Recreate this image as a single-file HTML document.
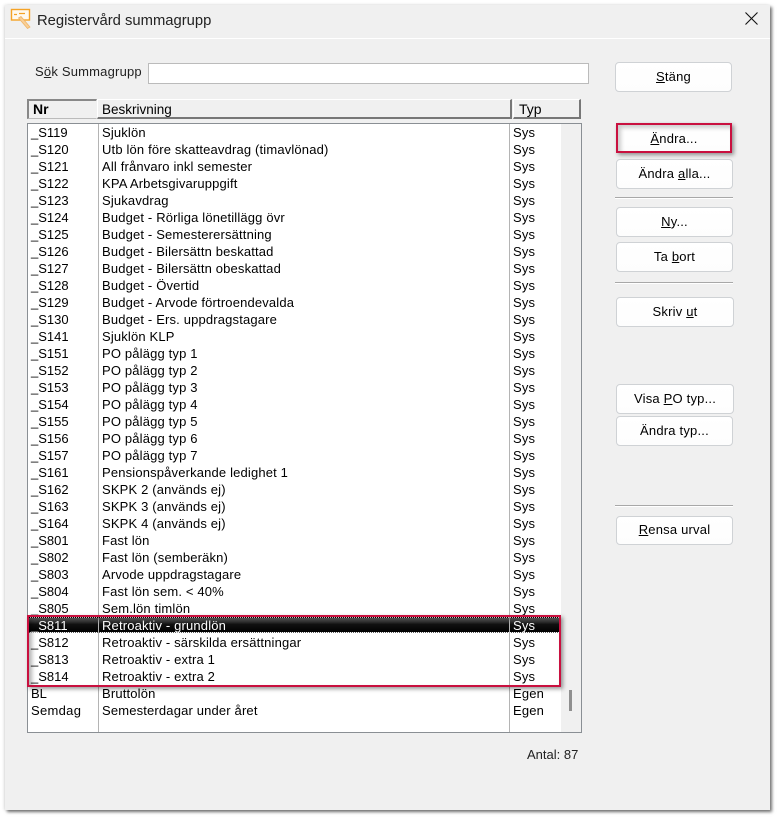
<!DOCTYPE html>
<html><head><meta charset="utf-8">
<style>
html,body{margin:0;padding:0;width:779px;height:819px;background:#fff;overflow:hidden}
body{font-family:"Liberation Sans",sans-serif;font-size:13px;color:#000;position:relative}
div{box-sizing:border-box;position:absolute}
#win{left:5px;top:5px;width:765px;height:805px;background:#f0f0f0;box-shadow:2px 2px 3px rgba(0,0,0,.55),-1px 0 3px rgba(0,0,0,.12)}
.t{white-space:nowrap;line-height:17px;height:17px}
.r{left:0;width:779px;height:17px}
.n{left:31px}.b{left:102px;letter-spacing:.16px}.y{left:513px;letter-spacing:.16px}
.btn{background:linear-gradient(#fff,#fdfdfd);border:1px solid #cfd2d5;border-radius:4px;text-align:center;white-space:nowrap;color:#000;letter-spacing:.2px}
.sep{left:615px;width:118px;height:2px;background:linear-gradient(#a8a8a8 50%,#fff 50%)}
.red{border:2.5px solid #c9103f;box-shadow:2px 2px 4px rgba(0,0,0,.4),inset 3px 3px 4px rgba(0,0,0,.3)}
u{text-underline-offset:1px}
.hd{background:#f0f0f0;border-top:1px solid #fff;border-left:1px solid #fff;border-right:2px solid #777;border-bottom:2px solid #777;line-height:17px;font-size:13.5px}
</style></head><body>
<div id="win"></div>
<div style="left:5px;top:38px;width:765px;height:1px;background:#fff"></div>
<svg style="position:absolute;left:10px;top:8px" width="22" height="22" viewBox="0 0 22 22"><rect x="1.5" y="1.5" width="18" height="10.5" fill="#fffaf0" stroke="#f5a326" stroke-width="1.4"/><path d="M4 6.5h3M9 5.5h6" stroke="#f5a326" stroke-width="1.2"/><path d="M11 8.5l9 10.5-2.5 1.5-9-10.5z" fill="#f9cf96" stroke="#eeb468" stroke-width=".8"/></svg>
<div class="t" style="left:37px;top:12px;font-size:14.8px;color:#222;line-height:18px;height:18px">Registervård summagrupp</div>
<svg style="position:absolute;left:745px;top:12px" width="13" height="13" viewBox="0 0 13 13"><path d="M.5 .5l12 12M12.5 .5l-12 12" stroke="#111" stroke-width="1.1" fill="none"/></svg>

<div class="t" style="left:35px;top:63px;color:#222;letter-spacing:.2px">S<u>ö</u>k Summagrupp</div>
<div style="left:148px;top:63px;width:441px;height:21px;background:#fff;border:1px solid #bbb"></div>

<div class="hd t" style="left:27px;top:99px;width:70px;height:20px;border-top:2px solid #888;border-left:2px solid #888;border-right:1px solid #f0f0f0;border-bottom:1px solid #bbb;font-weight:bold;font-size:14px;padding:0 0 0 4px">Nr</div>
<div class="hd t" style="left:97px;top:99px;width:415px;height:19.5px;padding:1px 0 0 4px">Beskrivning</div>
<div class="hd t" style="left:513px;top:99px;width:68px;height:19.5px;padding:1px 0 0 5px;font-size:14px">Typ</div>

<div style="left:27px;top:123px;width:555px;height:610px;background:#fff;border:1px solid #8a8f94"></div>
<div style="left:561px;top:124px;width:20px;height:608px;background:#f0f0f0"></div>
<div style="left:569px;top:690px;width:3px;height:21px;background:#8f8f8f"></div>

<div class="r" style="top:617px;height:16px;left:28px;width:533px;background:linear-gradient(#666,#111 45%,#000);border-top:1px dotted #fff;border-bottom:1px dotted #fff"></div>

<div class="t n" style="top:124px">_S119</div><div class="t b" style="top:124px">Sjuklön</div><div class="t y" style="top:124px">Sys</div>
<div class="t n" style="top:141px">_S120</div><div class="t b" style="top:141px">Utb lön före skatteavdrag (timavlönad)</div><div class="t y" style="top:141px">Sys</div>
<div class="t n" style="top:158px">_S121</div><div class="t b" style="top:158px">All frånvaro inkl semester</div><div class="t y" style="top:158px">Sys</div>
<div class="t n" style="top:175px">_S122</div><div class="t b" style="top:175px">KPA Arbetsgivaruppgift</div><div class="t y" style="top:175px">Sys</div>
<div class="t n" style="top:192px">_S123</div><div class="t b" style="top:192px">Sjukavdrag</div><div class="t y" style="top:192px">Sys</div>
<div class="t n" style="top:209px">_S124</div><div class="t b" style="top:209px">Budget - Rörliga lönetillägg övr</div><div class="t y" style="top:209px">Sys</div>
<div class="t n" style="top:226px">_S125</div><div class="t b" style="top:226px">Budget - Semesterersättning</div><div class="t y" style="top:226px">Sys</div>
<div class="t n" style="top:243px">_S126</div><div class="t b" style="top:243px">Budget - Bilersättn beskattad</div><div class="t y" style="top:243px">Sys</div>
<div class="t n" style="top:260px">_S127</div><div class="t b" style="top:260px">Budget - Bilersättn obeskattad</div><div class="t y" style="top:260px">Sys</div>
<div class="t n" style="top:277px">_S128</div><div class="t b" style="top:277px">Budget - Övertid</div><div class="t y" style="top:277px">Sys</div>
<div class="t n" style="top:294px">_S129</div><div class="t b" style="top:294px">Budget - Arvode förtroendevalda</div><div class="t y" style="top:294px">Sys</div>
<div class="t n" style="top:311px">_S130</div><div class="t b" style="top:311px">Budget - Ers. uppdragstagare</div><div class="t y" style="top:311px">Sys</div>
<div class="t n" style="top:328px">_S141</div><div class="t b" style="top:328px">Sjuklön KLP</div><div class="t y" style="top:328px">Sys</div>
<div class="t n" style="top:345px">_S151</div><div class="t b" style="top:345px">PO pålägg typ 1</div><div class="t y" style="top:345px">Sys</div>
<div class="t n" style="top:362px">_S152</div><div class="t b" style="top:362px">PO pålägg typ 2</div><div class="t y" style="top:362px">Sys</div>
<div class="t n" style="top:379px">_S153</div><div class="t b" style="top:379px">PO pålägg typ 3</div><div class="t y" style="top:379px">Sys</div>
<div class="t n" style="top:396px">_S154</div><div class="t b" style="top:396px">PO pålägg typ 4</div><div class="t y" style="top:396px">Sys</div>
<div class="t n" style="top:413px">_S155</div><div class="t b" style="top:413px">PO pålägg typ 5</div><div class="t y" style="top:413px">Sys</div>
<div class="t n" style="top:430px">_S156</div><div class="t b" style="top:430px">PO pålägg typ 6</div><div class="t y" style="top:430px">Sys</div>
<div class="t n" style="top:447px">_S157</div><div class="t b" style="top:447px">PO pålägg typ 7</div><div class="t y" style="top:447px">Sys</div>
<div class="t n" style="top:464px">_S161</div><div class="t b" style="top:464px">Pensionspåverkande ledighet 1</div><div class="t y" style="top:464px">Sys</div>
<div class="t n" style="top:481px">_S162</div><div class="t b" style="top:481px">SKPK 2 (används ej)</div><div class="t y" style="top:481px">Sys</div>
<div class="t n" style="top:498px">_S163</div><div class="t b" style="top:498px">SKPK 3 (används ej)</div><div class="t y" style="top:498px">Sys</div>
<div class="t n" style="top:515px">_S164</div><div class="t b" style="top:515px">SKPK 4 (används ej)</div><div class="t y" style="top:515px">Sys</div>
<div class="t n" style="top:532px">_S801</div><div class="t b" style="top:532px">Fast lön</div><div class="t y" style="top:532px">Sys</div>
<div class="t n" style="top:549px">_S802</div><div class="t b" style="top:549px">Fast lön (semberäkn)</div><div class="t y" style="top:549px">Sys</div>
<div class="t n" style="top:566px">_S803</div><div class="t b" style="top:566px">Arvode uppdragstagare</div><div class="t y" style="top:566px">Sys</div>
<div class="t n" style="top:583px">_S804</div><div class="t b" style="top:583px">Fast lön sem. &lt; 40%</div><div class="t y" style="top:583px">Sys</div>
<div class="t n" style="top:600px">_S805</div><div class="t b" style="top:600px">Sem.lön timlön</div><div class="t y" style="top:600px">Sys</div>
<div class="t n" style="top:617px;color:#fff">_S811</div><div class="t b" style="top:617px;color:#fff">Retroaktiv - grundlön</div><div class="t y" style="top:617px;color:#fff">Sys</div>
<div class="t n" style="top:634px">_S812</div><div class="t b" style="top:634px">Retroaktiv - särskilda ersättningar</div><div class="t y" style="top:634px">Sys</div>
<div class="t n" style="top:651px">_S813</div><div class="t b" style="top:651px">Retroaktiv - extra 1</div><div class="t y" style="top:651px">Sys</div>
<div class="t n" style="top:668px">_S814</div><div class="t b" style="top:668px">Retroaktiv - extra 2</div><div class="t y" style="top:668px">Sys</div>
<div class="t n" style="top:685px">BL</div><div class="t b" style="top:685px">Bruttolön</div><div class="t y" style="top:685px">Egen</div>
<div class="t n" style="top:702px;letter-spacing:.3px">Semdag</div><div class="t b" style="top:702px">Semesterdagar under året</div><div class="t y" style="top:702px">Egen</div>

<div style="left:98px;top:124px;width:1px;height:608px;background:#b4b4b4"></div>
<div style="left:509px;top:124px;width:1px;height:608px;background:#b4b4b4"></div>

<div class="red" style="left:27px;top:615px;width:534px;height:72px"></div>

<div class="t" style="left:527px;top:746px;color:#222">Antal: 87</div>

<div class="btn" style="left:615px;top:62px;width:117px;height:30px;line-height:28px"><u>S</u>täng</div>
<div class="btn" style="left:616px;top:123px;width:116px;height:30px;line-height:28px;border:2px solid #c9103f;border-radius:0;box-shadow:2px 2px 4px rgba(0,0,0,.4),inset 3px 3px 4px rgba(0,0,0,.2)"><u>Ä</u>ndra...</div>
<div class="btn" style="left:616px;top:159px;width:117px;height:30px;line-height:28px">Ändra <u>a</u>lla...</div>
<div class="sep" style="top:197px"></div>
<div class="btn" style="left:616px;top:207px;width:117px;height:30px;line-height:28px"><u>N</u>y...</div>
<div class="btn" style="left:616px;top:242px;width:117px;height:30px;line-height:28px">Ta <u>b</u>ort</div>
<div class="sep" style="top:282px"></div>
<div class="btn" style="left:616px;top:297px;width:118px;height:30px;line-height:28px">Skriv <u>u</u>t</div>
<div class="btn" style="left:616px;top:384px;width:118px;height:30px;line-height:28px">Visa <u>P</u>O typ...</div>
<div class="btn" style="left:616px;top:416px;width:117px;height:30px;line-height:28px">Ändra typ...</div>
<div class="sep" style="top:505px"></div>
<div class="btn" style="left:616px;top:516px;width:117px;height:29px;line-height:26px"><u>R</u>ensa urval</div>
</body></html>
